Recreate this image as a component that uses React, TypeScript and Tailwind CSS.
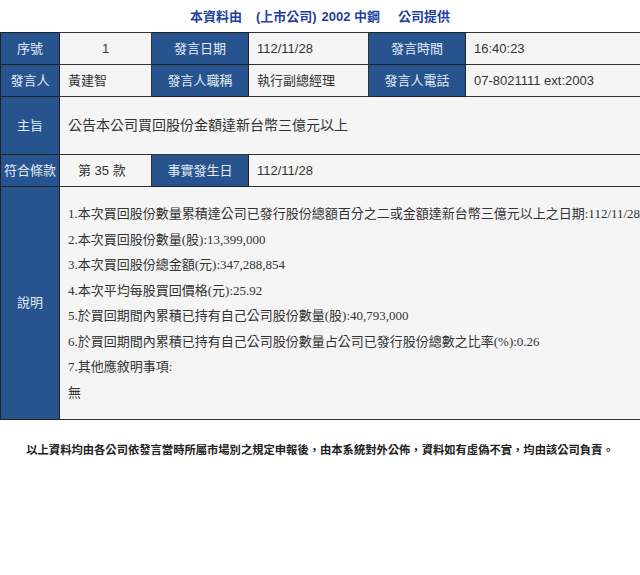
import React from "react";

const LBL =
  "bg-[#27548f] text-[#e4ebf5] text-center align-middle border border-[#222] px-0";
const VAL =
  "bg-[#f5f5f5] text-[#333] align-middle border border-[#333] px-2";

export default function App() {
  const lines = [
    "1.本次買回股份數量累積達公司已發行股份總額百分之二或金額達新台幣三億元以上之日期:112/11/28",
    "2.本次買回股份數量(股):13,399,000",
    "3.本次買回股份總金額(元):347,288,854",
    "4.本次平均每股買回價格(元):25.92",
    "5.於買回期間內累積已持有自己公司股份數量(股):40,793,000",
    "6.於買回期間內累積已持有自己公司股份數量占公司已發行股份總數之比率(%):0.26",
    "7.其他應敘明事項:",
    "無",
  ];
  return (
    <div className="w-[640px] h-[575px] overflow-hidden bg-white font-['Liberation_Sans','Noto_Sans_CJK_TC',sans-serif]">
      <div className="h-[32px] flex items-center justify-center pt-[2px] text-[13px] font-bold text-[#1f3f9f] whitespace-pre">
        <span>本資料由</span>
        <span className="ml-[14px]">(上市公司)</span>
        <span className="ml-[5px]">2002 中鋼</span>
        <span className="ml-[18px]">公司提供</span>
      </div>
      <table className="w-[680px] border-collapse table-fixed text-[13px]">
        <colgroup>
          <col className="w-[59px]" />
          <col className="w-[92px]" />
          <col className="w-[97px]" />
          <col className="w-[120px]" />
          <col className="w-[97px]" />
          <col />
        </colgroup>
        <tbody>
          <tr className="h-[32px]">
            <td className={LBL}>序號</td>
            <td className={VAL + " text-center"}>1</td>
            <td className={LBL}>發言日期</td>
            <td className={VAL}>112/11/28</td>
            <td className={LBL}>發言時間</td>
            <td className={VAL}>16:40:23</td>
          </tr>
          <tr className="h-[32px]">
            <td className={LBL}>發言人</td>
            <td className={VAL}>黃建智</td>
            <td className={LBL}>發言人職稱</td>
            <td className={VAL}>執行副總經理</td>
            <td className={LBL}>發言人電話</td>
            <td className={VAL}>07-8021111 ext:2003</td>
          </tr>
          <tr className="h-[58px]">
            <td className={LBL}>主旨</td>
            <td className={VAL + " text-[14px]"} colSpan={5}>
              公告本公司買回股份金額達新台幣三億元以上
            </td>
          </tr>
          <tr className="h-[32px]">
            <td className={LBL}>符合條款</td>
            <td className={VAL + " pl-[18px]"}>第 35 款</td>
            <td className={LBL}>事實發生日</td>
            <td className={VAL} colSpan={3}>
              112/11/28
            </td>
          </tr>
          <tr>
            <td className={LBL}>說明</td>
            <td
              className={
                VAL +
                " py-[14px] leading-[25.5px] whitespace-nowrap font-['Liberation_Serif','Noto_Sans_CJK_TC',serif]"
              }
              colSpan={5}
            >
              {lines.map((l, i) => (
                <div key={i}>{l}</div>
              ))}
            </td>
          </tr>
        </tbody>
      </table>
      <div className="mt-[22px] text-center text-[11.3px] font-bold text-[#222]">
        以上資料均由各公司依發言當時所屬市場別之規定申報後，由本系統對外公佈，資料如有虛偽不實，均由該公司負責。
      </div>
    </div>
  );
}
